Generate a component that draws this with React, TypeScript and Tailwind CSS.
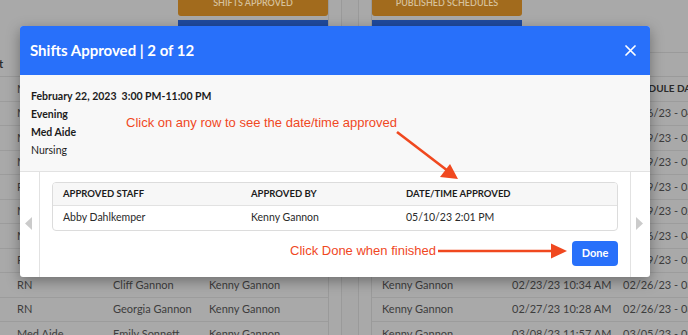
import React from "react";

const leftRows = [
  ["Med Aide", "Hope Lavelle", "Kenny Gannon"],
  ["Med Aide", "Sarah Miller", "Kenny Gannon"],
  ["Med Aide", "Jane Carter", "Kenny Gannon"],
  ["Med Aide", "Lynn Williams", "Kenny Gannon"],
  ["RN", "Rose Lavelle", "Kenny Gannon"],
  ["Med Aide", "Mallory Swanson", "Kenny Gannon"],
  ["Med Aide", "Megan Rapinoe", "Kenny Gannon"],
  ["RN", "Kelley O'Hara", "Kenny Gannon"],
  ["RN", "Cliff Gannon", "Kenny Gannon"],
  ["RN", "Georgia Gannon", "Kenny Gannon"],
  ["Med Aide", "Emily Sonnett", "Kenny Gannon"],
];

const rightRows = [
  ["Kenny Gannon", "03/20/23 09:12 AM", "03/26/23 - 04/22/23"],
  ["Kenny Gannon", "02/01/23 11:05 AM", "01/29/23 - 02/25/23"],
  ["Kenny Gannon", "02/14/23 02:40 PM", "02/19/23 - 03/18/23"],
  ["Kenny Gannon", "02/15/23 03:22 PM", "02/19/23 - 03/18/23"],
  ["Kenny Gannon", "01/30/23 10:02 AM", "01/29/23 - 02/25/23"],
  ["Kenny Gannon", "03/21/23 08:45 AM", "03/26/23 - 04/22/23"],
  ["Kenny Gannon", "02/02/23 01:17 PM", "01/29/23 - 02/25/23"],
  ["Kenny Gannon", "02/23/23 10:34 AM", "02/26/23 - 03/25/23"],
  ["Kenny Gannon", "02/27/23 10:28 AM", "02/26/23 - 03/25/23"],
  ["Kenny Gannon", "03/08/23 11:57 AM", "03/05/23 - 03/25/23"],
];

export default function App() {
  return (
    <div
      className="relative w-[688px] h-[335px] overflow-hidden bg-[#a7a7a7] text-[#3d3d3d]"
      style={{ fontFamily: "Lato, Inter, sans-serif" }}
    >
      {/* Background page */}
      <div className="flex h-full">
        {/* Left card */}
        <div className="w-[342px] shrink-0 border-r border-[#9a9a9a] bg-[#a9a9a9]">
          <div className="w-[329px] h-full border-r border-[#9a9a9a]">
            <div className="h-[52px] flex flex-col items-end">
              <div className="w-[150px] h-[26px] -mt-[10px] rounded-[3px] bg-[#a26b1d] flex items-center justify-center text-[9px] font-semibold text-[#d6c19c]">
                SHIFTS APPROVED
              </div>
              <div className="w-[150px] h-[6px] mt-[4px] bg-[#1f4a9e]" />
            </div>
            <div className="h-[25px] border-b border-[#9a9a9a] flex items-center text-[11px] font-bold text-[#2a2a2a]">
              <span className="-ml-[18px]">Unit</span>
            </div>
            {leftRows.map((r, i) => (
              <div
                key={i}
                className="h-[24.5px] border-b border-[#9c9c9c] grid grid-cols-[113px_96px_1fr] items-center text-[11px] overflow-hidden"
              >
                <span className="pl-[17px] whitespace-nowrap overflow-hidden">{r[0]}</span>
                <span className="whitespace-nowrap">{r[1]}</span>
                <span className="whitespace-nowrap">{r[2]}</span>
              </div>
            ))}
          </div>
        </div>
        {/* Right card */}
        <div className="ml-[16px] flex-1 border-l border-[#9a9a9a] bg-[#a9a9a9]">
          <div className="ml-[12px] h-full border-l border-[#9a9a9a]">
            <div className="h-[52px] flex flex-col">
              <div className="w-[150px] h-[26px] -mt-[10px] rounded-[3px] bg-[#a26b1d] flex items-center justify-center text-[9px] font-semibold text-[#d6c19c]">
                PUBLISHED SCHEDULES
              </div>
              <div className="w-[150px] h-[6px] mt-[4px] bg-[#1f4a9e]" />
            </div>
            <div className="h-[25px] border-t border-b border-[#9a9a9a]" />
            <div className="h-[24.5px] border-b border-[#9c9c9c] grid grid-cols-[140px_111px_1fr] items-center text-[10px] font-bold text-[#2a2a2a]">
              <span className="pl-[10px]">APPROVED BY</span>
              <span>APPROVED</span>
              <span className="whitespace-nowrap">SCHEDULE DATE</span>
            </div>
            {rightRows.map((r, i) => (
              <div
                key={i}
                className="h-[24.5px] border-b border-[#9c9c9c] grid grid-cols-[140px_111px_1fr] items-center text-[11px]"
              >
                <span className="pl-[10px] whitespace-nowrap">{r[0]}</span>
                <span className="whitespace-nowrap">{r[1]}</span>
                <span className="whitespace-nowrap">{r[2]}</span>
              </div>
            ))}
          </div>
        </div>
      </div>

      {/* Modal */}
      <div className="absolute left-[20px] top-[26px] w-[630px] rounded-[3px] bg-white shadow-[0_4px_14px_rgba(0,0,0,0.35)] overflow-hidden">
        <div className="h-[49px] bg-[#2870fa] flex items-center justify-between pl-[10px] pr-[14px]">
          <span className="text-white text-[15px] font-bold">
            Shifts Approved | 2 of 12
          </span>
          <svg width="11" height="11" viewBox="0 0 11 11">
            <path d="M1 1 L10 10 M10 1 L1 10" stroke="white" strokeWidth="1.7" strokeLinecap="round" />
          </svg>
        </div>
        <div className="h-[97px] bg-[#f8f8f8] border-b border-[#e2e2e2] pl-[11px] pt-[12px] text-[10.5px] leading-[18px] text-[#1c1c1c]">
          <div className="font-bold whitespace-pre">February 22, 2023  3:00 PM-11:00 PM</div>
          <div className="font-bold">Evening</div>
          <div className="font-bold">Med Aide</div>
          <div>Nursing</div>
        </div>
        <div className="h-[105px] flex">
          <div className="w-[20px] border-r border-[#e2e2e2] flex items-center justify-center">
            <svg width="8" height="13" viewBox="0 0 8 13" className="-mt-[2px] -ml-[2px]">
              <path d="M7 0 L0 6.5 L7 13 Z" fill="#cbcbcb" />
            </svg>
          </div>
          <div className="flex-1 px-[12px] pt-[10px]">
            <div className="rounded-[4px] border border-[#dcdcdc] overflow-hidden">
              <div className="h-[23px] bg-[#f7f7f7] border-b border-[#e2e2e2] grid grid-cols-[198px_155px_1fr] items-center text-[9.5px] font-bold text-[#1c1c1c]">
                <span className="pl-[10px]">APPROVED STAFF</span>
                <span>APPROVED BY</span>
                <span>DATE/TIME APPROVED</span>
              </div>
              <div className="h-[24px] grid grid-cols-[198px_155px_1fr] items-center text-[10.5px] text-[#2a2a2a]">
                <span className="pl-[10px]">Abby Dahlkemper</span>
                <span>Kenny Gannon</span>
                <span>05/10/23 2:01 PM</span>
              </div>
            </div>
            <div className="flex justify-end mt-[10px]">
              <button className="w-[46px] h-[25px] rounded-[4px] bg-[#2870fa] text-white text-[11px] font-bold">
                Done
              </button>
            </div>
          </div>
          <div className="w-[20px] border-l border-[#e2e2e2] flex items-center justify-center">
            <svg width="8" height="13" viewBox="0 0 8 13" className="-mt-[2px] -ml-[2px]">
              <path d="M0 0 L7 6.5 L0 13 Z" fill="#cbcbcb" />
            </svg>
          </div>
        </div>
      </div>

      {/* Annotations */}
      <div
        className="absolute left-[126px] top-[115px] text-[13px] leading-[15px] text-[#f0481f] whitespace-nowrap"
        style={{ fontFamily: "'Liberation Sans', Arial, sans-serif" }}
      >
        Click on any row to see the date/time approved
      </div>
      <div
        className="absolute left-[290px] top-[243px] text-[13px] leading-[15px] text-[#f0481f] whitespace-nowrap"
        style={{ fontFamily: "'Liberation Sans', Arial, sans-serif" }}
      >
        Click Done when finished
      </div>
      <svg className="absolute left-0 top-0 pointer-events-none" width="688" height="335" viewBox="0 0 688 335">
        <line x1="397" y1="132" x2="448" y2="171" stroke="#f0481f" strokeWidth="2.6" />
        <polygon points="458,179 440,177 450,164" fill="#f0481f" />
        <line x1="438" y1="251" x2="553" y2="251" stroke="#f0481f" strokeWidth="2.6" />
        <polygon points="567,251 551,243.5 551,258.5" fill="#f0481f" />
      </svg>
    </div>
  );
}
